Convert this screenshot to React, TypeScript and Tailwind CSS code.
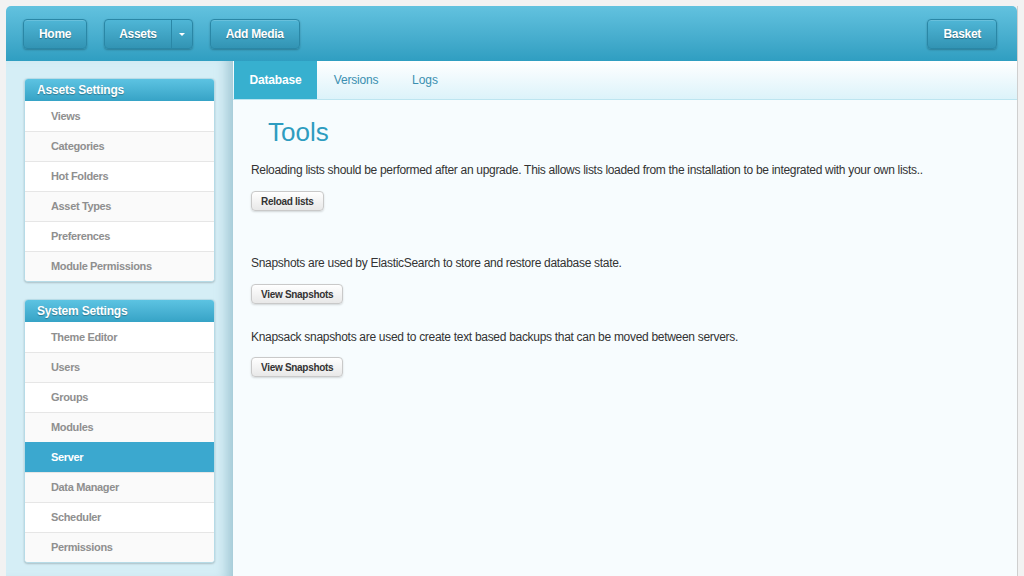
const assetItems = ["Views", "Categories", "Hot Folders", "Asset Types", "Preferences", "Module Permissions"];
const systemItems = ["Theme Editor", "Users", "Groups", "Modules", "Server", "Data Manager", "Scheduler", "Permissions"];

function TopButton({ label }: { label: string }) {
  return (
    <button className="h-[30px] px-[15px] rounded-[4px] border border-[#2a87a6] bg-gradient-to-b from-[#4fb6d6] to-[#3294b4] text-white text-[12px] font-bold tracking-[-0.3px] [text-shadow:0_1px_1px_rgba(0,0,0,0.35)] shadow-[0_1px_2px_rgba(0,0,0,0.25),inset_0_1px_0_rgba(255,255,255,0.15)]">
      {label}
    </button>
  );
}

function Panel({ title, items, active }: { title: string; items: string[]; active?: string }) {
  return (
    <div className="rounded-[4px] bg-white shadow-[0_1px_2px_rgba(0,0,0,0.2)] border border-[#b6dbe7] overflow-hidden">
      <div className="h-[22px] flex items-center px-3 bg-gradient-to-b from-[#5cc3e2] to-[#36a3c6] text-white text-[12px] font-bold tracking-[-0.2px] [text-shadow:0_1px_1px_rgba(0,0,0,0.3)]">
        {title}
      </div>
      {items.map((item, i) => (
        <div
          key={item}
          className={`h-[30px] flex items-center pl-[26px] text-[11px] font-bold tracking-[-0.35px] ${i > 0 ? "border-t" : ""} ${
            item === active
              ? "bg-[#3ba8cf] text-white border-[#3ba8cf]"
              : `${i % 2 === 0 ? "bg-white" : "bg-[#fafafa]"} text-[#8f8f8f] border-[#e6e6e6]`
          }`}
        >
          {item}
        </div>
      ))}
    </div>
  );
}

function SmallButton({ label }: { label: string }) {
  return (
    <button className="h-[20px] px-[9px] rounded-[4px] border border-[#c9c9c9] bg-gradient-to-b from-white to-[#e8e8e8] text-[#333] text-[10px] font-bold tracking-[-0.3px] shadow-[0_1px_2px_rgba(0,0,0,0.15)]">
      {label}
    </button>
  );
}

export default function App() {
  return (
    <div className="min-h-screen bg-[#f2f2f2] pt-[6px] pl-[6px] pr-[6px] font-['Liberation_Sans',Arial,sans-serif] overflow-hidden">
      <div className="w-[1012px] border-r border-[#cfcfcf]">
        {/* Header */}
        <header className="h-[55px] rounded-t-[5px] bg-gradient-to-b from-[#62c2df] to-[#2f9ec1] flex items-center justify-between pl-[17px] pr-[20px]">
          <div className="flex items-center gap-[17px]">
            <TopButton label="Home" />
            <div className="flex h-[30px] rounded-[4px] border border-[#2a87a6] bg-gradient-to-b from-[#4fb6d6] to-[#3294b4] shadow-[0_1px_2px_rgba(0,0,0,0.25)]">
              <span className="px-[14px] flex items-center text-white text-[12px] font-bold tracking-[-0.3px] [text-shadow:0_1px_1px_rgba(0,0,0,0.35)]">Assets</span>
              <span className="w-[21px] border-l border-[#2a87a6] flex items-center justify-center">
                <span className="w-0 h-0 border-l-[3px] border-r-[3px] border-t-[3px] border-l-transparent border-r-transparent border-t-white mt-[2px]" />
              </span>
            </div>
            <TopButton label="Add Media" />
          </div>
          <TopButton label="Basket" />
        </header>

        <div className="flex h-[515px]">
          {/* Sidebar */}
          <aside className="w-[227px] shrink-0 bg-[#d5eef6] pl-[18px] pr-[18px] pt-[17px] flex flex-col gap-[17px] shadow-[inset_-14px_0_12px_-8px_rgba(120,170,185,0.55)]">
            <Panel title="Assets Settings" items={assetItems} />
            <Panel title="System Settings" items={systemItems} active="Server" />
          </aside>

          {/* Main */}
          <main className="flex-1 bg-[#f7fcfe]">
            <nav className="h-[39px] flex bg-gradient-to-b from-white to-[#dcf3fa] border-b border-[#bde5f0] pl-px">
              <div className="w-[83px] flex items-center justify-center bg-[#37b0cf] text-white text-[12px] font-bold tracking-[-0.2px]">Database</div>
              <div className="w-[78px] flex items-center justify-center text-[#3a8fb0] text-[12px] tracking-[-0.2px]">Versions</div>
              <div className="w-[60px] flex items-center justify-center text-[#3a8fb0] text-[12px]">Logs</div>
            </nav>
            <div className="pl-[18px] pt-[16px] text-[12px] text-[#333] tracking-[-0.3px]">
              <h1 className="pl-[17px] text-[26px] leading-[32px] tracking-normal text-[#2e9cc0]">Tools</h1>
              <p className="mt-[15px] leading-[14px]">
                Reloading lists should be performed after an upgrade. This allows lists loaded from the installation to be integrated with your own lists..
              </p>
              <div className="mt-[14px]">
                <SmallButton label="Reload lists" />
              </div>
              <p className="mt-[45px] leading-[14px]">Snapshots are used by ElasticSearch to store and restore database state.</p>
              <div className="mt-[14px]">
                <SmallButton label="View Snapshots" />
              </div>
              <p className="mt-[26px] leading-[14px]">Knapsack snapshots are used to create text based backups that can be moved between servers.</p>
              <div className="mt-[13px]">
                <SmallButton label="View Snapshots" />
              </div>
            </div>
          </main>
        </div>
      </div>
    </div>
  );
}
